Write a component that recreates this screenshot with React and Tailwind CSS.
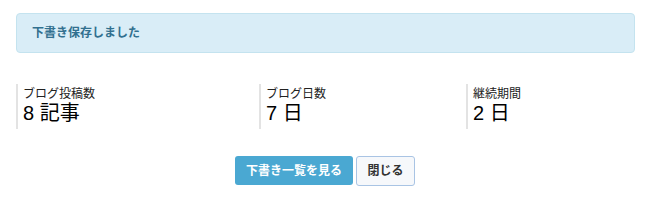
import React from "react";

const stats = [
  { label: "ブログ投稿数", value: "8 記事", width: "w-[243px]" },
  { label: "ブログ日数", value: "7 日", width: "w-[207px]" },
  { label: "継続期間", value: "2 日", width: "flex-1" },
];

export default function App() {
  return (
    <div
      className="w-[645px] h-[203px] bg-white pt-[13px]"
      style={{ fontFamily: '"Liberation Sans", "Noto Sans CJK JP", sans-serif' }}
    >
      {/* alert */}
      <div className="ml-[16px] w-[619px] h-[40px] flex items-center pl-[15px] rounded-[4px] border border-[#c4e3ef] bg-[#d9edf7] text-[#31708f] text-[12px] font-bold">
        下書き保存しました
      </div>

      {/* stats */}
      <div className="flex mt-[31px] pl-[16px] pr-[10px]">
        {stats.map((s) => (
          <div key={s.label} className={s.width}>
            <div className="border-l-2 border-[#e3e3e3] pl-[5px] pt-[3px] pb-[3px] text-[#222]">
              <div className="text-[12px] leading-[14px]">{s.label}</div>
              <div className="text-[20px] leading-[25px] text-black">{s.value}</div>
            </div>
          </div>
        ))}
      </div>

      {/* buttons */}
      <div className="flex justify-center gap-[3px] mt-[27px] pl-[5px]">
        <button className="h-[29px] w-[118px] rounded-[3px] bg-[#4aa8d2] text-white text-[12px] font-bold">
          下書き一覧を見る
        </button>
        <button className="h-[30px] w-[59px] rounded-[3px] border border-[#a9c4e4] bg-[#f6f8fb] text-[#333] text-[12px] font-bold">
          閉じる
        </button>
      </div>
    </div>
  );
}
